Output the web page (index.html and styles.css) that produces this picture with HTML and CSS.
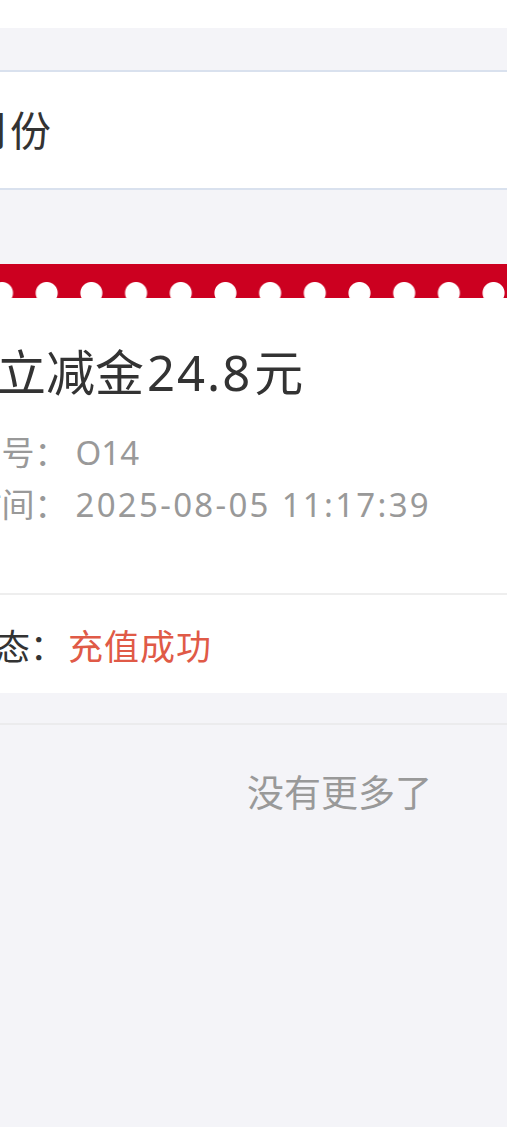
FILE: index.html
```html
<!DOCTYPE html>
<html lang="zh-CN">
<head>
<meta charset="utf-8">
<title>充值记录</title>
<link rel="stylesheet" href="styles.css">
</head>
<body>
<div class="topbar"></div>
<div class="month-row">
  <span class="month-label">选择月份</span>
</div>
<div class="card">
  <div class="card-head"></div>
  <div class="card-body">
    <div class="title">微信立减金<span class="amount">24.8</span>元</div>
    <div class="info"><span class="info-label">订单编号：</span><span class="info-value">O14</span></div>
    <div class="info"><span class="info-label">充值时间：</span><span class="info-value date">2025-08-05 11:17:39</span></div>
  </div>
  <div class="status-row">
    <span class="status-label">充值状态：</span><span class="status-value">充值成功</span>
  </div>
</div>
<div class="footer">没有更多了</div>
</body>
</html>
```
FILE: styles.css
```css
html, body {
  margin: 0;
  padding: 0;
}
body {
  background: #f4f4f8;
  font-family: "Noto Sans", "Noto Sans CJK SC", sans-serif;
  overflow: hidden;
  height: 1127px;
}
.topbar {
  height: 28px;
  background: #ffffff;
}
.month-row {
  margin-top: 42px;
  height: 116px;
  background: #ffffff;
  border-top: 2px solid #d9e1ee;
  border-bottom: 2px solid #d9e1ee;
  display: flex;
  align-items: center;
  white-space: nowrap;
}
.month-label {
  font-size: 41px;
  color: #333333;
  margin-left: -113px;
  line-height: 1;
}
.card {
  margin-top: 74px;
  background: #ffffff;
}
.card-head {
  height: 34px;
  background-color: #cc0020;
  background-image: radial-gradient(circle at 50% 29px, #ffffff 10.5px, rgba(255,255,255,0) 11.5px);
  background-size: 44.7px 34px;
  background-position: -20.35px 0;
  background-repeat: repeat-x;
}
.card-body {
  padding: 44px 0 62px;
  white-space: nowrap;
}
.title {
  font-size: 49px;
  line-height: 60px;
  color: #333333;
  margin-left: -101px;
  margin-bottom: 25px;
}
.amount {
  margin-left: 3px;
  letter-spacing: 2px;
  margin-right: 2px;
}
.info {
  font-size: 33px;
  line-height: 52px;
  color: #999999;
  margin-left: -97.5px;
}
.info-value {
  margin-left: 8px;
}
.info-value.date {
  letter-spacing: 2.3px;
}
.status-row {
  border-top: 2px solid #eeeeee;
  height: 98px;
  display: flex;
  align-items: center;
  white-space: nowrap;
  font-size: 35px;
}
.status-label {
  color: #333333;
  margin-left: -110px;
}
.status-value {
  color: #e05a47;
  margin-left: 3px;
  letter-spacing: 1px;
}
.footer {
  margin-top: 30px;
  border-top: 2px solid #ebebed;
  padding-top: 44px;
  padding-left: 247px;
  font-size: 37px;
  line-height: 48px;
  color: #999999;
}
```
